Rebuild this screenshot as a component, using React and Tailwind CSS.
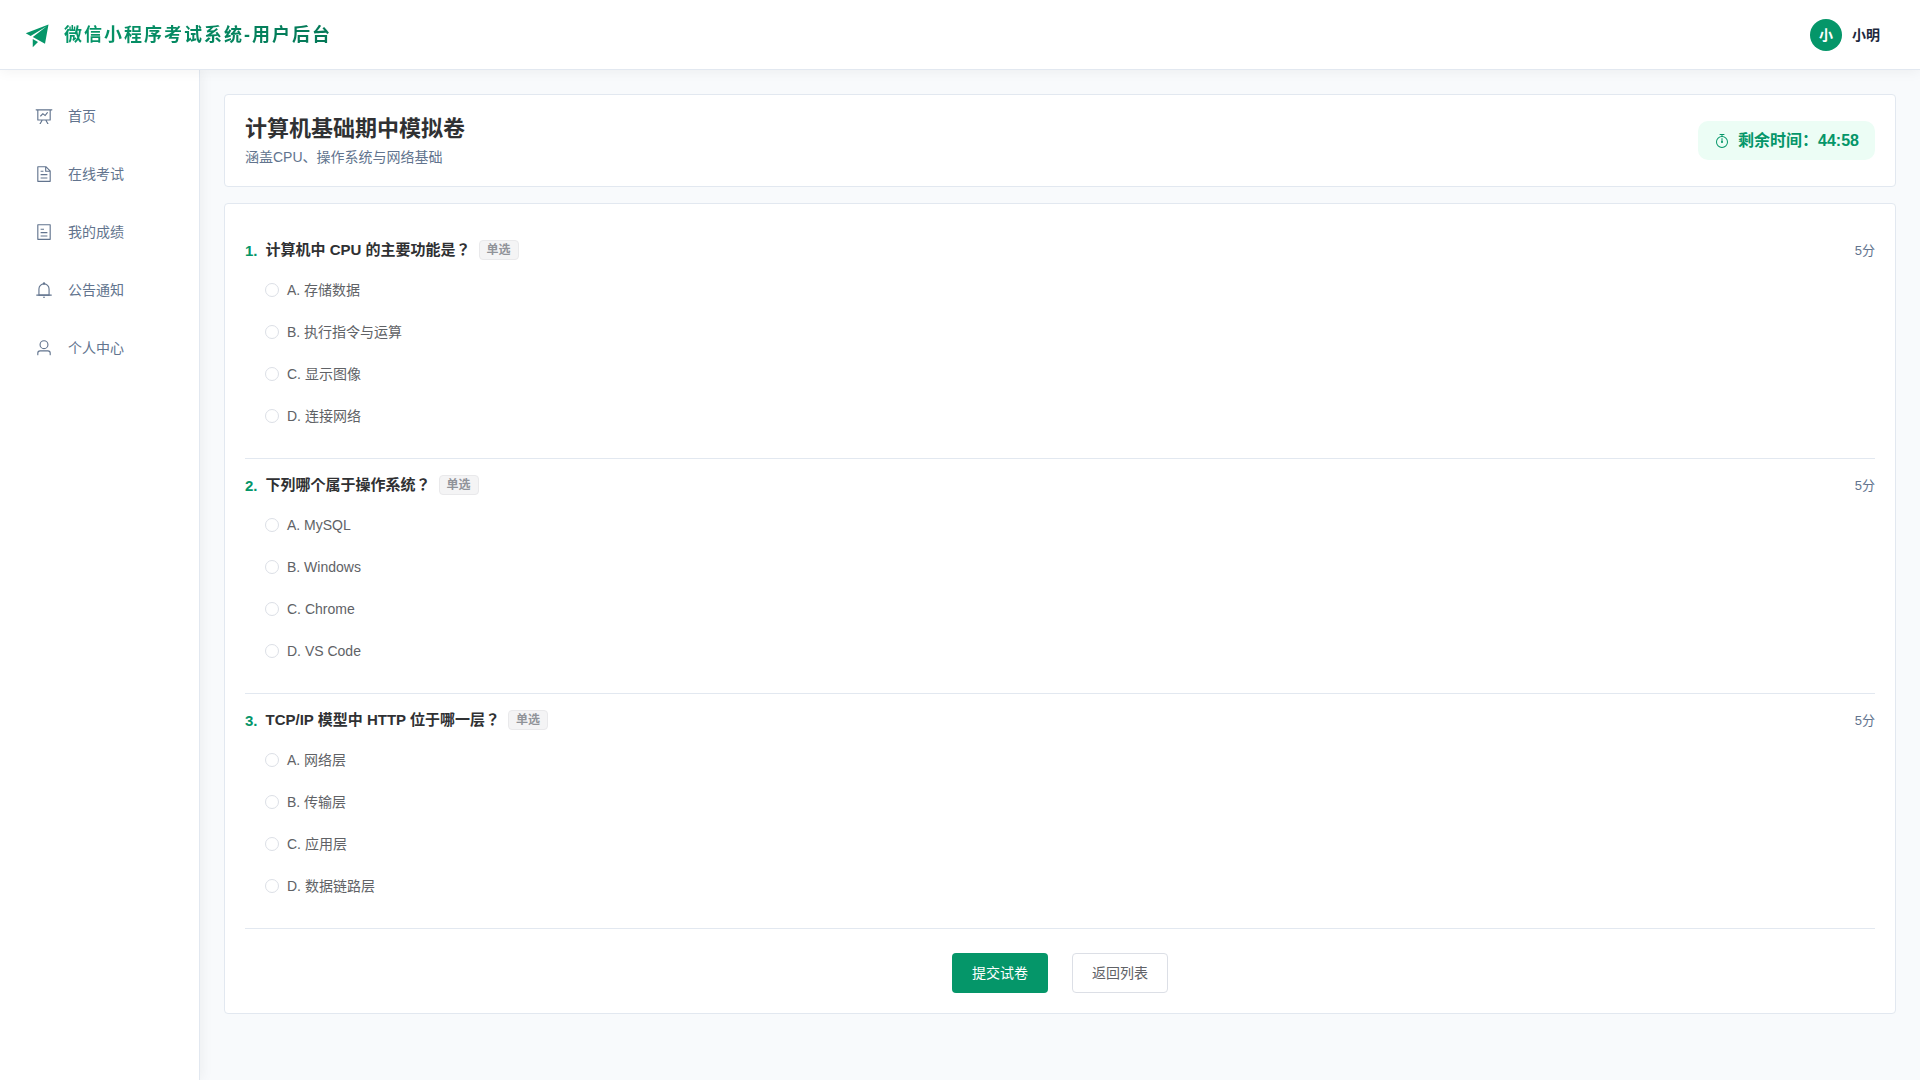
const ICONS = {
  board: [
    "M359.168 768H160a32 32 0 0 1-32-32V192H64a32 32 0 0 1 0-64h896a32 32 0 1 1 0 64h-64v544a32 32 0 0 1-32 32H665.216l110.848 192h-73.792L591.36 768H433.024L322.176 960H248.32l110.848-192zM832 192H192v512h640V192zM342.656 534.656a32 32 0 1 1-45.312-45.312L444.992 341.76l125.44 94.08L679.04 300.032a32 32 0 1 1 49.92 39.936L581.632 524.224 451.008 426.24 342.656 534.592z",
  ],
  document: [
    "M832 384H576V128H192v768h640V384zm-26.496-64L640 154.496V320h165.504zM160 64h480l256 256v608a32 32 0 0 1-32 32H160a32 32 0 0 1-32-32V96a32 32 0 0 1 32-32zm160 448h384v64H320v-64zm0-192h160v64H320v-64zm0 384h384v64H320v-64z",
  ],
  tickets: [
    "M192 128v768h640V128H192zm-32-64h704a32 32 0 0 1 32 32v832a32 32 0 0 1-32 32H160a32 32 0 0 1-32-32V96a32 32 0 0 1 32-32zm160 448h384v64H320v-64zm0-192h192v64H320v-64zm0 384h384v64H320v-64z",
  ],
  bell: [
    "M512 64a64 64 0 0 1 64 64v64H448v-64a64 64 0 0 1 64-64z",
    "M256 768h512V448a256 256 0 1 0-512 0v320zm256-640a320 320 0 0 1 320 320v384H192V448a320 320 0 0 1 320-320z",
    "M96 768h832q32 0 32 32t-32 32H96q-32 0-32-32t32-32zm352 128h128a64 64 0 0 1-128 0z",
  ],
  user: [
    "M512 512a192 192 0 1 0 0-384 192 192 0 0 0 0 384zm0 64a256 256 0 1 1 0-512 256 256 0 0 1 0 512zm320 320v-96a96 96 0 0 0-96-96H288a96 96 0 0 0-96 96v96a32 32 0 1 1-64 0v-96a160 160 0 0 1 160-160h448a160 160 0 0 1 160 160v96a32 32 0 1 1-64 0z",
  ],
  timer: [
    "M512 896a320 320 0 1 0 0-640 320 320 0 0 0 0 640zm0 64a384 384 0 1 1 0-768 384 384 0 0 1 0 768z",
    "M512 320a32 32 0 0 1 32 32l-.512 224a32 32 0 1 1-64 0L480 352a32 32 0 0 1 32-32z",
    "M448 576a64 64 0 1 0 128 0 64 64 0 1 0-128 0zm96-448v128h-64V128h-96a32 32 0 0 1 0-64h256a32 32 0 1 1 0 64h-96z",
  ],
  plane: ["m64 448 832-320-128 704-446.08-243.328L832 192 242.816 545.472 64 448zm256 512V657.024L512 768 320 960z"],
};

function Icon({ name, className }) {
  return (
    <svg viewBox="0 0 1024 1024" fill="currentColor" aria-hidden="true" className={className}>
      {ICONS[name].map((d) => (
        <path key={d} d={d} />
      ))}
    </svg>
  );
}

const NAV = [
  { icon: "board", label: "首页" },
  { icon: "document", label: "在线考试" },
  { icon: "tickets", label: "我的成绩" },
  { icon: "bell", label: "公告通知" },
  { icon: "user", label: "个人中心" },
];

const QUESTIONS = [
  {
    title: "计算机中 CPU 的主要功能是？",
    options: ["A. 存储数据", "B. 执行指令与运算", "C. 显示图像", "D. 连接网络"],
  },
  {
    title: "下列哪个属于操作系统？",
    options: ["A. MySQL", "B. Windows", "C. Chrome", "D. VS Code"],
  },
  {
    title: "TCP/IP 模型中 HTTP 位于哪一层？",
    options: ["A. 网络层", "B. 传输层", "C. 应用层", "D. 数据链路层"],
  },
];

function Header() {
  return (
    <header className="relative z-20 flex h-[70px] items-center justify-between border-b border-slate-200 bg-white pr-10 pl-6 shadow-[0_2px_12px_rgba(0,0,0,0.05)]">
      <div className="flex items-center gap-3">
        <Icon name="plane" className="size-7 text-[#059669]" />
        <span className="bg-linear-to-r from-[#059669] to-[#047857] bg-clip-text text-lg font-semibold tracking-[2px] text-transparent">
          微信小程序考试系统-用户后台
        </span>
      </div>
      <button type="button" className="flex items-center gap-2.5">
        <span className="flex size-8 items-center justify-center rounded-full bg-[#059669] text-sm font-semibold text-white">
          小
        </span>
        <span className="text-sm font-semibold text-slate-800">小明</span>
      </button>
    </header>
  );
}

function Sidebar() {
  return (
    <nav className="relative z-10 flex w-[200px] shrink-0 flex-col gap-2 border-r border-slate-200 bg-white pt-[21px] shadow-[2px_0_12px_rgba(0,0,0,0.05)]">
      {NAV.map((item) => (
        <a key={item.label} href="#" className="flex h-[50px] items-center gap-3 pl-8 text-sm text-slate-500">
          <span className="flex w-6 justify-center">
            <Icon name={item.icon} className="size-[18px]" />
          </span>
          {item.label}
        </a>
      ))}
    </nav>
  );
}

function Question({ index, title, options }) {
  return (
    <div role="radiogroup" aria-labelledby={`title-${index}`} className="border-b border-slate-200 py-4">
      <div className="flex h-5 items-start justify-between">
        <div className="flex items-start gap-2 text-[15px] font-semibold">
          <span className="leading-[22px] text-[#059669]">{index}.</span>
          <span
            id={`title-${index}`}
            className="font-['Liberation_Sans','Droid_Sans_Fallback','Noto_Sans_CJK_JP',sans-serif] leading-5 text-[#303133]"
          >
            {title}
          </span>
          <span className="flex h-5 items-center rounded border border-[#e9e9eb] bg-[#f4f4f5] px-[7px] text-xs font-bold text-[#909399]">
            单选
          </span>
        </div>
        <span className="text-[13px] leading-[22px] text-slate-500">5分</span>
      </div>
      <div className="mt-3.5 ml-5 flex flex-col items-start gap-2.5 pb-2.5">
        {options.map((option) => (
          <label key={option} className="flex h-8 items-center gap-2 text-sm text-[#606266]">
            <input
              type="radio"
              name={`question-${index}`}
              className="size-3.5 appearance-none rounded-full border border-[#dcdfe6] bg-white checked:border-4 checked:border-[#059669]"
            />
            {option}
          </label>
        ))}
      </div>
    </div>
  );
}

export default function App() {
  return (
    <div className="flex min-h-screen flex-col bg-slate-50 font-['Liberation_Sans','Droid_Sans_Fallback','Noto_Sans_CJK_SC',sans-serif]">
      <Header />
      <div className="flex flex-1">
        <Sidebar />
        <main className="flex min-w-0 flex-1 flex-col gap-4 p-6">
          <section className="flex items-center justify-between rounded border border-slate-200 bg-white p-5">
            <div>
              <h1 className="text-[22px] leading-7 font-bold text-[#303133]">计算机基础期中模拟卷</h1>
              <p className="mt-1.5 text-sm leading-[17px] text-slate-500">涵盖CPU、操作系统与网络基础</p>
            </div>
            <div className="flex h-[39px] items-center gap-2 rounded-[10px] bg-[#ecfdf5] px-4 font-semibold text-[#059669]">
              <Icon name="timer" className="size-4" />
              <span>剩余时间：44:58</span>
            </div>
          </section>
          <form className="rounded border border-slate-200 bg-white p-5">
            {QUESTIONS.map((q, i) => (
              <Question key={q.title} index={i + 1} title={q.title} options={q.options} />
            ))}
            <div className="mt-6 flex justify-center gap-6">
              <button type="button" className="h-10 rounded bg-[#059669] px-5 text-sm text-white">
                提交试卷
              </button>
              <button type="button" className="h-10 rounded border border-[#dcdfe6] bg-white px-[19px] text-sm text-[#606266]">
                返回列表
              </button>
            </div>
          </form>
        </main>
      </div>
    </div>
  );
}
